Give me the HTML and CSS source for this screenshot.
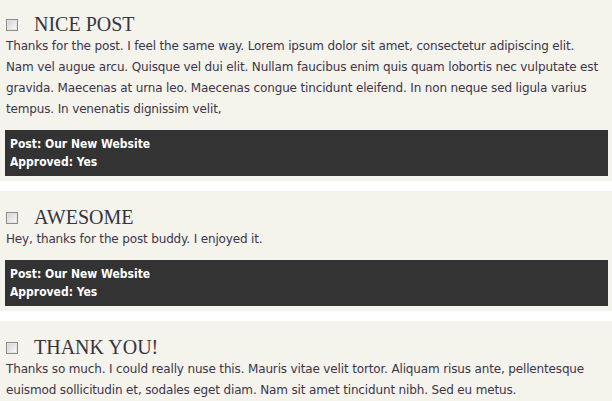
FILE: index.html
```html
<!DOCTYPE html>
<html>
<head>
<meta charset="utf-8">
<link rel="stylesheet" href="styles.css">
</head>
<body>
<div class="comments">
  <div class="comment">
    <h3 class="comment-title"><input type="checkbox" class="check"><span>NICE POST</span></h3>
    <p class="comment-body">Thanks for the post. I feel the same way. Lorem ipsum dolor sit amet, consectetur adipiscing elit. Nam vel augue arcu. Quisque vel dui elit. Nullam faucibus enim quis quam lobortis nec vulputate est gravida. Maecenas at urna leo. Maecenas congue tincidunt eleifend. In non neque sed ligula varius tempus. In venenatis dignissim velit,</p>
    <div class="meta">
      <div>Post: Our New Website</div>
      <div>Approved: Yes</div>
    </div>
  </div>
  <div class="comment">
    <h3 class="comment-title"><input type="checkbox" class="check"><span>AWESOME</span></h3>
    <p class="comment-body">Hey, thanks for the post buddy. I enjoyed it.</p>
    <div class="meta">
      <div>Post: Our New Website</div>
      <div>Approved: Yes</div>
    </div>
  </div>
  <div class="comment">
    <h3 class="comment-title"><input type="checkbox" class="check"><span>THANK YOU!</span></h3>
    <p class="comment-body">Thanks so much. I could really nuse this. Mauris vitae velit tortor. Aliquam risus ante, pellentesque euismod sollicitudin et, sodales eget diam. Nam sit amet tincidunt nibh. Sed eu metus.</p>
    <div class="meta">
      <div>Post: Our New Website</div>
      <div>Approved: Yes</div>
    </div>
  </div>
</div>
</body>
</html>
```
FILE: styles.css
```css
html, body {
  margin: 0;
  padding: 0;
  background: #ffffff;
}
.comments {
  margin-top: -2px;
  display: flex;
  flex-direction: column;
  gap: 10px;
}
.comment {
  background: #f4f3ec;
  padding: 14px 4px 5px 5px;
}
.comment-title {
  margin: 0;
  display: flex;
  align-items: center;
  font-family: "Liberation Serif", "Times New Roman", serif;
  font-weight: normal;
  font-size: 20px;
  line-height: 24px;
  color: #36353f;
}
.check {
  appearance: none;
  -webkit-appearance: none;
  margin: 1px 16px 0 1px;
  width: 12px;
  height: 12px;
  box-sizing: border-box;
  border: 1px solid #8c8c8c;
  background: linear-gradient(135deg, #d2d2d2 0%, #ececec 65%, #ffffff 100%);
  box-shadow: inset 0 0 0 1px #e4e4e4;
}
.comment-body {
  margin: 0 0 10px 0;
  padding: 0 10px 0 1px;
  font-family: "DejaVu Sans", sans-serif;
  font-size: 12px;
  letter-spacing: -0.15px;
  line-height: 21px;
  color: #3d3548;
}
.meta {
  background: #333333;
  color: #ffffff;
  padding: 5px;
  font-family: "DejaVu Sans Condensed", "DejaVu Sans", sans-serif;
  font-stretch: condensed;
  font-weight: bold;
  font-size: 12px;
  line-height: 18px;
}
```
